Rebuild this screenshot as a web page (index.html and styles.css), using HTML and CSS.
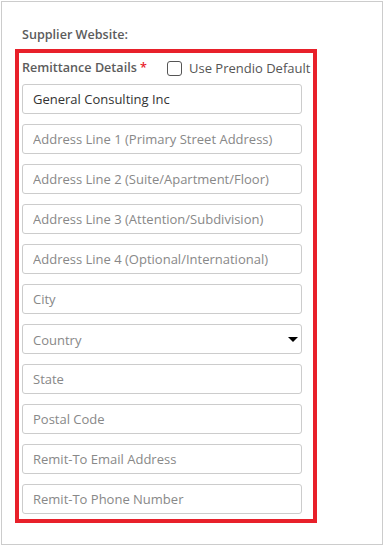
FILE: index.html
```html
<!DOCTYPE html>
<html lang="en">
<head>
<meta charset="UTF-8" />
<title>Remittance Details</title>
<link rel="stylesheet" href="styles.css">
</head>
<body>
<div class="panel">
  <div class="site-label">Supplier Website:</div>

  <section class="remit">
    <div class="remit-head">
      <span class="remit-title">Remittance Details <span class="req">*</span></span>
      <label class="default-check">
        <input type="checkbox" />
        <span>Use Prendio Default</span>
      </label>
    </div>

    <input class="field" type="text" value="General Consulting Inc" />
    <input class="field" type="text" placeholder="Address Line 1 (Primary Street Address)" />
    <input class="field" type="text" placeholder="Address Line 2 (Suite/Apartment/Floor)" />
    <input class="field" type="text" placeholder="Address Line 3 (Attention/Subdivision)" />
    <input class="field" type="text" placeholder="Address Line 4 (Optional/International)" />
    <input class="field" type="text" placeholder="City" />
    <div class="select-wrap">
      <select class="field">
        <option>Country</option>
      </select>
    </div>
    <input class="field" type="text" placeholder="State" />
    <input class="field" type="text" placeholder="Postal Code" />
    <input class="field" type="text" placeholder="Remit-To Email Address" />
    <input class="field" type="text" placeholder="Remit-To Phone Number" />
  </section>
</div>
</body>
</html>
```

FILE: styles.css
```css
body {
  margin: 0;
  font-family: "Open Sans", "Liberation Sans", sans-serif;
  font-size: 13px;
  color: #555;
  background: #fff;
}
.panel {
  margin: 1px;
  width: 382px;
  height: 544px;
  box-sizing: border-box;
  border: 1px solid #ccc;
  padding: 24px 0 0 13px;
}
.site-label {
  padding-left: 7px;
  line-height: 18px;
  font-size: 12.6px;
  font-weight: 600;
  color: #5c5c5c;
  margin-bottom: 5px;
}
.remit {
  width: 302px;
  box-sizing: border-box;
  border: 4px solid #e8202a;
  padding: 6px 11px 5px 3px;
  display: flex;
  flex-direction: column;
  gap: 10px;
}
.remit-head {
  display: flex;
  align-items: center;
  line-height: 18px;
  margin-bottom: -3px;
  white-space: nowrap;
}
.remit-title {
  font-size: 12.6px;
  font-weight: 600;
  color: #5c5c5c;
}
.req {
  color: #e8202a;
}
.default-check {
  display: flex;
  align-items: center;
  margin-left: 20px;
  gap: 7px;
}
.default-check input {
  appearance: none;
  width: 15px;
  height: 15px;
  margin: 0;
  border: 1px solid #555;
  border-radius: 3px;
  background: #fff;
}
.field {
  display: block;
  width: 280px;
  height: 30px;
  box-sizing: border-box;
  border: 1px solid #ccc;
  border-radius: 3px;
  padding: 0 10px;
  font-family: inherit;
  font-size: 13px;
  color: #333;
  background: #fff;
}
.field::placeholder {
  color: #888;
}
.select-wrap {
  position: relative;
}
.select-wrap select {
  appearance: none;
  padding-top: 2px;
  color: #888;
}
.select-wrap::after {
  content: "";
  position: absolute;
  right: 4px;
  top: 13px;
  border-left: 5px solid transparent;
  border-right: 5px solid transparent;
  border-top: 5px solid #000;
}
```
